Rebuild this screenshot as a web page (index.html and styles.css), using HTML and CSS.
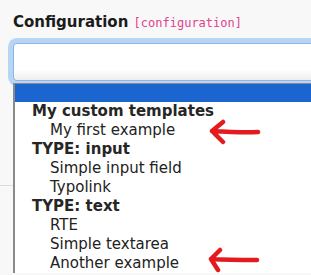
FILE: index.html
```
<!DOCTYPE html>
<html lang="en">
   <head>
      <meta charset="UTF-8">
      <title>Configuration</title>
      <link rel="stylesheet" href="styles.css">
   </head>
   <body>
      <div class="field">
         <label class="title">Configuration <code>[configuration]</code></label>
         <div class="input"></div>
         <div class="sideLine"></div>
         <div class="dropdown">
            <div class="opt selected"></div>
            <div class="group">My custom templates</div>
            <div class="opt">My first example</div>
            <div class="group">TYPE: input</div>
            <div class="opt">Simple input field</div>
            <div class="opt">Typolink</div>
            <div class="group">TYPE: text</div>
            <div class="opt">RTE</div>
            <div class="opt">Simple textarea</div>
            <div class="opt">Another example</div>
         </div>
      </div>
      <svg class="arrow one" width="60" height="30" viewBox="0 0 60 30">
         <path d="M4 12 C20 13 36 14 50 13 M4 12 L15 3 M4 12 L15 23" />
      </svg>
      <svg class="arrow two" width="60" height="30" viewBox="0 0 60 30">
         <path d="M3 14 C20 15 34 15 49 15 M3 14 L12 5 M3 14 L10 25" />
      </svg>
   </body>
</html>
```
FILE: styles.css
```
html,body{
   margin:0;
   padding:0;
   height:100%;
   overflow:hidden;
   background:#f8f8f8;
   font-family:"DejaVu Sans",Verdana,sans-serif;
}
.field{
   position:relative;
   padding-top:12px;
}
.title{
   display:block;
   margin-left:13px;
   font-size:15px;
   font-weight:bold;
   color:#1b1b1b;
   line-height:20px;
}
.title code{
   font-family:"DejaVu Sans Mono",monospace;
   font-size:12px;
   font-weight:normal;
   color:#e3418e;
}
.input{
   margin-top:10px;
   margin-left:13px;
   width:calc(100% - 13px);
   height:38px;
   box-sizing:border-box;
   border:1px solid #86b7ec;
   border-right:none;
   border-radius:4px 0 0 4px;
   background:linear-gradient(#fff 0,#fff 70%,#eeeeee 100%);
   box-shadow:0 0 0 5px #b8d6f4;
}
.sideLine{
   position:absolute;
   left:0;
   top:185px;
   width:13px;
   border-top:1px solid #dcdcdc;
}
.dropdown{
   position:relative;
   margin-top:2px;
   margin-left:13px;
   width:calc(100% - 13px);
   box-sizing:border-box;
   background:#fff;
   border-left:2px solid #8a8a8a;
   border-top:1px solid #8a8a8a;
   font-size:15px;
   color:#222;
}
.opt,.group{
   height:19px;
   line-height:19px;
   padding-left:35px;
   white-space:nowrap;
}
.group{
   padding-left:17px;
   font-weight:bold;
   color:#262626;
}
.selected{
   height:18px;
   background:#1b65d0;
}
.arrow{
   position:absolute;
   fill:none;
   stroke:#e31b1f;
   stroke-width:4.5;
   stroke-linecap:round;
   stroke-linejoin:round;
}
.one{
   left:208px;
   top:119px;
}
.two{
   left:208px;
   top:245px;
}
```
